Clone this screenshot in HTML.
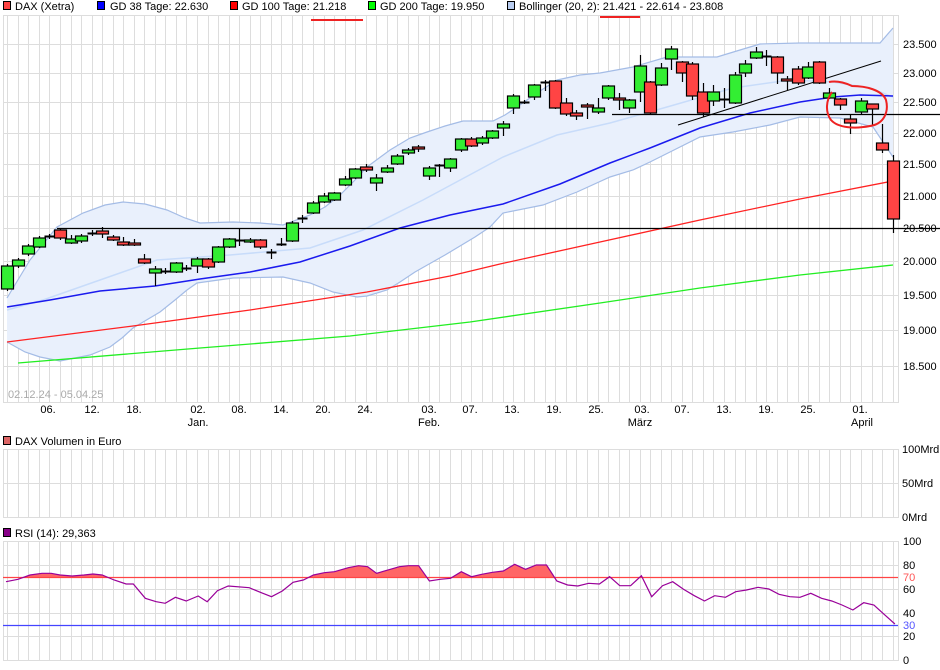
<!DOCTYPE html>
<html><head><meta charset="utf-8"><style>
html,body{margin:0;padding:0;background:#fff;width:940px;height:670px;overflow:hidden}
svg{display:block;font-family:"Liberation Sans",sans-serif}
</style></head><body>
<svg id="s" width="940" height="670" viewBox="0 0 940 670" xmlns="http://www.w3.org/2000/svg">
<g font-size="11" fill="#000">
<rect x="3.5" y="1.5" width="7" height="8" fill="#f44" stroke="#000"/><text x="15" y="10">DAX (Xetra)</text>
<rect x="97.5" y="1.5" width="7" height="8" fill="#00f" stroke="#000"/><text x="110" y="10">GD 38 Tage: 22.630</text>
<rect x="230.5" y="1.5" width="7" height="8" fill="#f00" stroke="#000"/><text x="242" y="10">GD 100 Tage: 21.218</text>
<rect x="368.5" y="1.5" width="7" height="8" fill="#0f0" stroke="#000"/><text x="380" y="10">GD 200 Tage: 19.950</text>
<rect x="507.5" y="1.5" width="7" height="8" fill="#b8ccf0" stroke="#000"/><text x="519" y="10">Bollinger (20, 2): 21.421 - 22.614 - 23.808</text>
</g>
<g id="grid" stroke="#ddd" stroke-width="1"></g>
<g id="bands"></g>
<g id="candles"></g>
<g id="rsi"></g>
<g id="labels" font-size="11" fill="#000"></g>
</svg>
<script>
var NS="http://www.w3.org/2000/svg";
function el(p,t,a,txt){var e=document.createElementNS(NS,t);for(var k in a)e.setAttribute(k,a[k]);if(txt!=null)e.textContent=txt;document.getElementById(p).appendChild(e);return e;}
function X(i){return 7.3+i*10.54;}
var panels=[[15,402],[449,517],[541,660]];
for(var p=0;p<3;p++){var t=panels[p][0],b=panels[p][1];
 el('grid','rect',{x:3.5,y:t+.5,width:895,height:b-t,fill:'none'});
 for(var i=0;i<85;i++){var x=Math.round(X(i))+.5;el('grid','line',{x1:x,y1:t,x2:x,y2:b});}
}
var py=[44,73,102,133,164,196,228,261,295,330,366];
var pl=["23.500","23.000","22.500","22.000","21.500","21.000","20.500","20.000","19.500","19.000","18.500"];
py.forEach(function(y,k){el('grid','line',{x1:3,y1:y+.5,x2:898,y2:y+.5});el('labels','text',{x:903,y:y+4},pl[k]);});
el('grid','line',{x1:3,y1:483.5,x2:898,y2:483.5});
[565,589,613,636].forEach(function(y){el('grid','line',{x1:3,y1:y+.5,x2:898,y2:y+.5});});
var up=[[7,298],[30,260],[57,227],[83,213],[105,205],[123,202],[145,204],[167,210],[185,218],[200,223],[233,222],[260,223],[283,225],[310,215],[325,207],[340,195],[355,180],[367,167],[390,150],[410,138],[427,132],[445,126],[463,121],[493,121],[505,115],[517,107],[537,93],[557,80],[580,75],[600,73],[633,67],[667,57],[717,57],[740,50],[760,44],[800,43],[880,43],[893,28]];
var lo=[[7,342],[25,352],[40,357],[60,361],[90,355],[110,347],[122,338],[133,328],[160,312],[175,300],[187,290],[197,283],[233,278],[283,277],[310,283],[333,292],[357,297],[367,296],[387,290],[400,282],[415,272],[445,255],[475,237],[490,227],[503,213],[543,205],[577,192],[610,177],[633,170],[650,162],[670,152],[700,137],[733,132],[770,125],[800,117],[840,118],[873,127],[893,157]];
var md=[[7,310],[43,300],[100,280],[157,260],[230,255],[310,248],[363,230],[423,200],[503,157],[557,135],[610,123],[667,107],[733,88],[790,80],[833,82],[870,88],[893,97]];
function pts(a){return a.map(function(p){return p.join(',')}).join(' ');}
el('bands','polygon',{points:pts(up)+' '+pts(lo.slice().reverse()),fill:'#e9f0fc'});
el('bands','polyline',{points:pts(up),fill:'none',stroke:'#a4bce6','stroke-width':1.2});
el('bands','polyline',{points:pts(lo),fill:'none',stroke:'#a4bce6','stroke-width':1.2});
el('bands','polyline',{points:pts(md),fill:'none',stroke:'#c8dcfa','stroke-width':1.5});
el('bands','polyline',{points:'7,307 50,300 100,291 155,286 200,279 250,272 300,262 350,246 400,228 450,215 503,204 560,184 610,163 650,148 700,128 750,113 800,102 833,97 860,95 893,96',fill:'none',stroke:'#1a1aee','stroke-width':1.5});
el('bands','polyline',{points:'7,342 133,326 250,310 367,292 450,276 500,264 600,242 700,220 800,199 893,181',fill:'none',stroke:'#f22','stroke-width':1.3});
el('bands','polyline',{points:'18,363 200,348 350,336 470,322 600,303 700,288 800,275 893,265',fill:'none',stroke:'#2e2','stroke-width':1.3});
el('bands','line',{x1:57,y1:228.5,x2:940,y2:228.5,stroke:'#000','stroke-width':1.2});
el('bands','line',{x1:612,y1:114.5,x2:940,y2:114.5,stroke:'#000','stroke-width':1.2});
el('bands','line',{x1:678,y1:125,x2:881,y2:61,stroke:'#000','stroke-width':1});
var C=[['g',266,289,264,291],['g',260,266,258,268],['g',246,254,244,256],['g',238,247,236,248],['d',236,236,234,239],['r',230,238,229,240],['g',239,243,235,244],['g',236,241,234,243],['d',233,233,230,236],['r',231,234,227,238],['r',237,240,235,241],['r',242,245,237,246],['r',243,245,239,246],['r',259,263,254,264],['g',269,273,266,286],['d',271,271,268,274],['g',263,272,262,273],['d',268,268,265,271],['g',259,266,257,273],['r',259,267,258,269],['g',247,262,246,263],['g',239,247,238,248],['d',240,240,229,246],['g',240,242,238,243],['r',240,247,239,249],['d',252,252,249,259],['d',244,244,238,246],['g',223,241,221,242],['d',218,218,215,223],
['g',203,213,201,214],['g',196,202,193,203],['g',193,200,192,201],['g',179,185,176,186],['g',169,178,168,179],['r',167,170,164,172],['g',178,183,174,191],['g',168,172,165,173],['g',156,164,154,165],['g',150,153,148,155],['r',147,149,145,152],['g',168,176,166,180],['d',165,165,164,177],['g',159,168,158,172],['g',139,150,138,152],['r',139,146,137,147],['g',138,143,136,145],['g',131,138,130,139],['g',124,128,121,136],['g',96,108,94,114],['d',102,102,100,104],['g',85,97,84,100],['d',82,82,80,91],['r',81,108,80,109],['r',103,114,98,116],['r',113,116,110,120],['r',105,107,103,119],['g',108,112,98,114],['g',86,98,85,100],
['r',98,100,93,110],['g',100,108,99,113],['g',66,92,55,102],['r',82,113,81,114],['g',68,85,63,86],['g',49,59,46,70],['r',62,73,61,82],['r',64,96,62,100],['r',92,113,83,117],['g',92,101,85,106],['d',99,99,88,108],['g',75,103,72,104],['g',64,73,60,77],['g',52,58,47,59],['d',56,56,50,66],['r',57,73,56,84],['r',79,80,76,90],['r',69,83,66,85],['g',67,78,62,79],['r',62,83,61,84],['g',93,98,88,99],['r',99,105,98,110],['r',119,123,115,134],['g',101,112,98,115],['r',104,109,104,125],['r',143,150,124,153],['r',161,219,155,233]];
C.forEach(function(c,i){var x=Math.round(X(i))+.5;
 el('candles','line',{x1:x,y1:c[3],x2:x,y2:c[4],stroke:'#000','stroke-width':1.2});
 if(c[0]=='d'){el('candles','line',{x1:x-5,y1:c[1]+.5,x2:x+5,y2:c[1]+.5,stroke:'#000','stroke-width':2});}
 else{var h=Math.max(c[2]-c[1],2);el('candles','rect',{x:x-6,y:c[1],width:12,height:h,fill:c[0]=='g'?'#3e3':'#f44',stroke:'#000','stroke-width':1.2});}
});
el('candles','path',{d:'M829,82 C838,80 848,84 852,86 C866,86 882,90 886,100 C889,112 884,124 870,126 C855,129 838,128 831,120 C825,112 826,100 832,92',fill:'none',stroke:'#e22','stroke-width':2});
el('candles','line',{x1:311,y1:20,x2:363,y2:20,stroke:'#e22','stroke-width':2});
el('candles','line',{x1:600,y1:17,x2:640,y2:17,stroke:'#e22','stroke-width':2});
var dl=[[48,'06.'],[92,'12.'],[134,'18.'],[198,'02.'],[239,'08.'],[281,'14.'],[323,'20.'],[365,'24.'],[429,'03.'],[470,'07.'],[512,'13.'],[554,'19.'],[596,'25.'],[642,'03.'],[682,'07.'],[724,'13.'],[766,'19.'],[808,'25.'],[860,'01.']];
dl.forEach(function(d){el('labels','text',{x:d[0],y:413,'text-anchor':'middle'},d[1]);});
[[198,'Jan.'],[429,'Feb.'],[640,'März'],[862,'April']].forEach(function(d){el('labels','text',{x:d[0],y:426,'text-anchor':'middle'},d[1]);});
el('labels','text',{x:8,y:398,fill:'#aaa'},'02.12.24 - 05.04.25');
el('labels','rect',{x:3.5,y:436.5,width:7,height:8,fill:'#d66',stroke:'#000'});
el('labels','text',{x:15,y:445},'DAX Volumen in Euro');
[[449,'100Mrd'],[483,'50Mrd'],[517,'0Mrd']].forEach(function(d){el('labels','text',{x:902,y:d[0]+4},d[1]);});
el('labels','rect',{x:3.5,y:528.5,width:7,height:8,fill:'#808',stroke:'#000'});
el('labels','text',{x:15,y:537},'RSI (14): 29,363');
[[541,'100'],[565,'80'],[589,'60'],[613,'40'],[636,'20'],[660,'0']].forEach(function(d){el('labels','text',{x:903,y:d[0]+4},d[1]);});
el('labels','text',{x:903,y:581,fill:'#f55'},'70');
el('labels','text',{x:903,y:629,fill:'#55f'},'30');
var R=[[10,485],[30,478],[50,465],[70,460],[85,460],[100,465],[120,468],[140,465],[155,462],[170,465],[190,480],[210,492],[222,492],[242,535],[260,545],[275,550],[292,532],[310,543],[330,528],[345,545],[362,512],[380,498],[415,503],[435,518],[452,530],[470,513],[488,487],[505,480],[522,465],[540,458],[557,455],[580,443],[597,437],[612,440],[627,460],[665,440],[680,437],[697,437],[715,483],[733,478],[750,475],[768,455],[785,470],[802,463],[820,457],[838,453],[857,433],[875,448],[893,435],[910,435],[927,483],[945,495],[962,498],[980,490],[998,492],[1015,470],[1032,497],[1050,497],[1068,467],[1085,530],[1103,497],[1120,485],[1138,508],[1156,527],[1173,543],[1190,527],[1208,532],[1225,515],[1243,510],[1262,502],[1280,507],[1297,523],[1315,530],[1332,532],[1350,520],[1368,535],[1385,543],[1402,555],[1420,570],[1438,548],[1455,555],[1472,583],[1490,612]].map(function(p){return [(p[0]/1.665).toFixed(1),(p[1]/3+420).toFixed(1)];});
var defs=el('s','defs',{});var cp=document.createElementNS(NS,'clipPath');cp.setAttribute('id','cp');defs.appendChild(cp);
var cr=document.createElementNS(NS,'rect');cr.setAttribute('x',0);cr.setAttribute('y',541);cr.setAttribute('width',900);cr.setAttribute('height',36);cp.appendChild(cr);
el('rsi','polygon',{points:R[0][0]+',577 '+pts(R)+' '+R[R.length-1][0]+',577',fill:'#f66','clip-path':'url(#cp)'});
el('rsi','line',{x1:3,y1:577.5,x2:898,y2:577.5,stroke:'#f44','stroke-width':1.2});
el('rsi','line',{x1:3,y1:625.5,x2:898,y2:625.5,stroke:'#44f','stroke-width':1.2});
el('rsi','polyline',{points:pts(R),fill:'none',stroke:'#909','stroke-width':1.2});
</script>
</body></html>
